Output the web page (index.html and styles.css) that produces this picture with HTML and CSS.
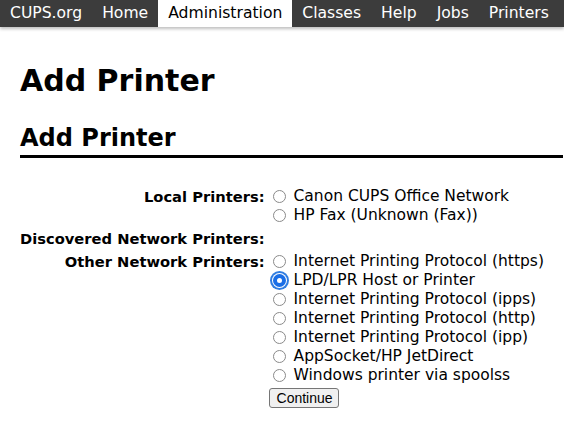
FILE: index.html
```html
<!DOCTYPE html>
<html>
<head>
<meta charset="utf-8">
<link rel="stylesheet" href="styles.css">
</head>
<body>
<nav class="nav">
  <a class="nav-item">CUPS.org</a>
  <a class="nav-item">Home</a>
  <a class="nav-item active">Administration</a>
  <a class="nav-item">Classes</a>
  <a class="nav-item">Help</a>
  <a class="nav-item">Jobs</a>
  <a class="nav-item">Printers</a>
</nav>
<main class="main">
  <h1 class="title">Add Printer</h1>
  <h2 class="subtitle">Add Printer</h2>
  <form class="form">
    <table class="table">
      <tr>
        <th class="label">Local Printers:</th>
        <td class="opts">
          <label class="opt"><input type="radio" name="p" class="radio"> Canon CUPS Office Network</label>
          <label class="opt"><input type="radio" name="p" class="radio"> HP Fax (Unknown (Fax))</label>
        </td>
      </tr>
      <tr>
        <th class="label">Discovered Network Printers:</th>
        <td class="opts"></td>
      </tr>
      <tr>
        <th class="label">Other Network Printers:</th>
        <td class="opts">
          <label class="opt"><input type="radio" name="p" class="radio"> Internet Printing Protocol (https)</label>
          <label class="opt"><input type="radio" name="p" class="radio" checked> LPD/LPR Host or Printer</label>
          <label class="opt"><input type="radio" name="p" class="radio"> Internet Printing Protocol (ipps)</label>
          <label class="opt"><input type="radio" name="p" class="radio"> Internet Printing Protocol (http)</label>
          <label class="opt"><input type="radio" name="p" class="radio"> Internet Printing Protocol (ipp)</label>
          <label class="opt"><input type="radio" name="p" class="radio"> AppSocket/HP JetDirect</label>
          <label class="opt"><input type="radio" name="p" class="radio"> Windows printer via spoolss</label>
        </td>
      </tr>
      <tr>
        <th class="label"></th>
        <td class="opts btn-cell"><button type="button" class="btn">Continue</button></td>
      </tr>
    </table>
  </form>
</main>
</body>
</html>
```
FILE: styles.css
```css
html, body {
  margin: 0;
  padding: 0;
  background: #fff;
}
body {
  font-family: "DejaVu Sans", sans-serif;
  color: #000;
}
.nav {
  display: flex;
  height: 27px;
  background: #3c3c3c;
  box-shadow: 0 2px 3px rgba(0,0,0,0.25);
  padding-left: 0;
}
.nav-item {
  display: block;
  padding: 0 10px;
  font-size: 15.6px;
  line-height: 27px;
  color: #fff;
  text-decoration: none;
}
.nav-item.active {
  background: #fff;
  color: #000;
}
.main {
  padding: 0 1px 0 20px;
}
.title {
  font-size: 30px;
  font-weight: bold;
  margin: 34px 0 0;
  line-height: 40px;
}
.subtitle {
  font-size: 24px;
  font-weight: bold;
  margin: 22px 0 0;
  line-height: 30px;
  border-bottom: 3px solid #000;
  padding-bottom: 2px;
}
.form {
  margin-top: 27px;
}
.table {
  border-collapse: collapse;
}
.label {
  text-align: right;
  vertical-align: top;
  font-size: 14.7px;
  font-weight: bold;
  padding: 2px 4px 2px 0;
  line-height: 19px;
  white-space: nowrap;
}
.opts {
  vertical-align: top;
  padding: 2px 0 2px;
  font-size: 15.5px;
  line-height: 19px;
}
.btn-cell {
  padding-top: 1px;
}
.opt {
  display: flex;
  align-items: center;
  gap: 8px;
  white-space: nowrap;
}
.radio {
  appearance: none;
  -webkit-appearance: none;
  margin: 0 0 0 4px;
  width: 13px;
  height: 13px;
  border: 1px solid #8a8a8a;
  border-radius: 50%;
  background: #fff;
  box-sizing: border-box;
  flex: none;
}
.radio:checked {
  border: 4px solid #1a6ee6;
  background: #fff;
  box-shadow: 0 0 0 1px #fff, 0 0 0 3px #2f7de1;
}
.btn {
  display: block;
  margin-top: 0;
  font-family: "Liberation Sans", Arial, sans-serif;
  font-size: 14px;
  padding: 0 7px;
  height: 20px;
  width: 70px;
  background: #f0f0f0;
  border: 1px solid #767676;
  border-radius: 3px;
  color: #000;
}
```
